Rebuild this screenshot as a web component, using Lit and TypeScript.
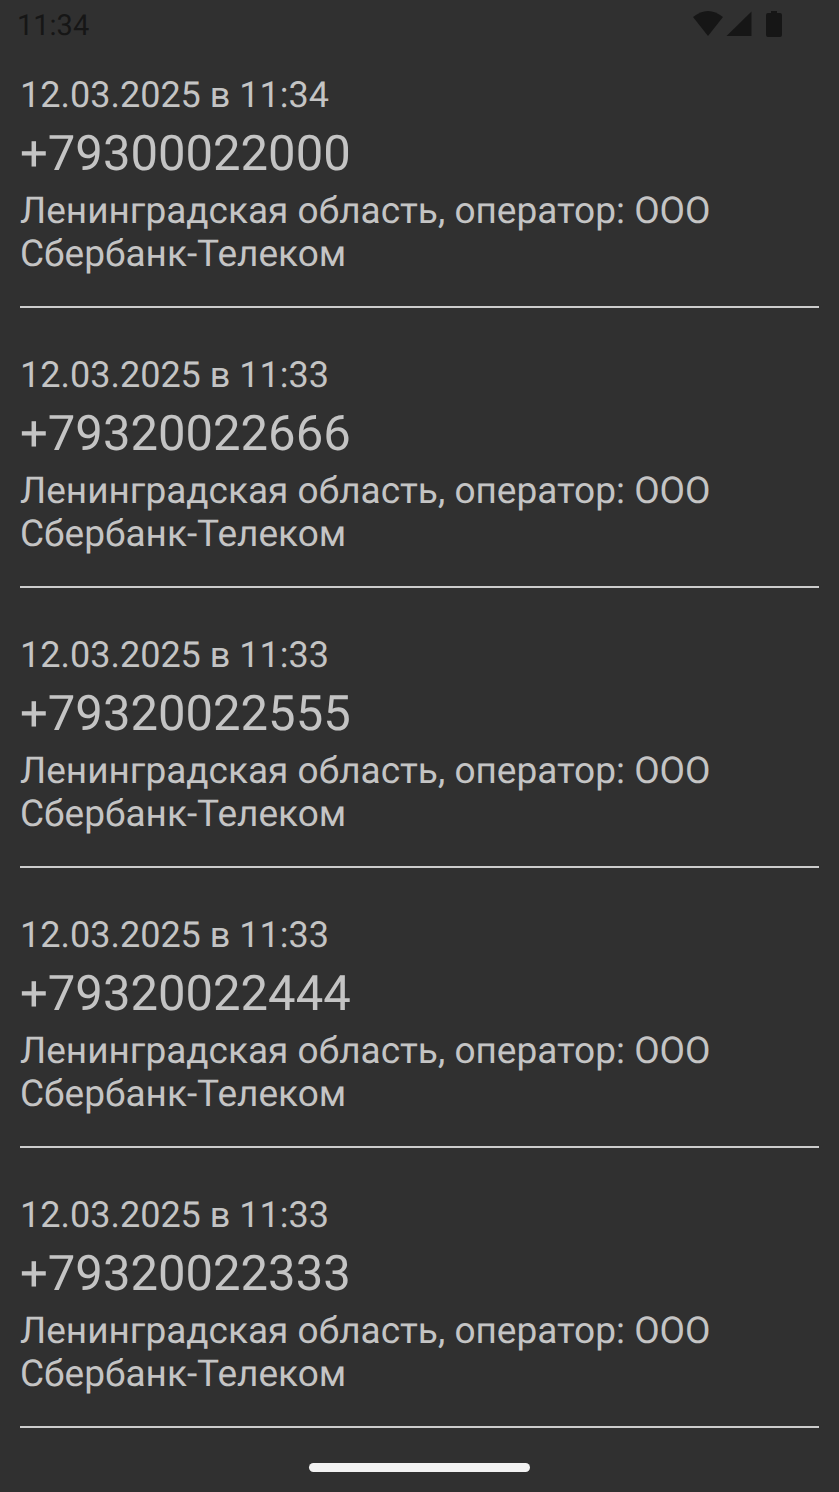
import { LitElement, html, css } from "lit";
import { customElement } from "lit/decorators.js";

interface Call {
  date: string;
  phone: string;
  info: string;
}

const INFO = "Ленинградская область, оператор: ООО Сбербанк-Телеком";

const CALLS: Call[] = [
  { date: "12.03.2025 в 11:34", phone: "+79300022000", info: INFO },
  { date: "12.03.2025 в 11:33", phone: "+79320022666", info: INFO },
  { date: "12.03.2025 в 11:33", phone: "+79320022555", info: INFO },
  { date: "12.03.2025 в 11:33", phone: "+79320022444", info: INFO },
  { date: "12.03.2025 в 11:33", phone: "+79320022333", info: INFO },
];

@customElement("app-root")
export class AppRoot extends LitElement {
  static styles = css`
    :host {
      display: flex;
      flex-direction: column;
      min-height: 100vh;
      background: #303030;
      color: #c4c4c4;
      font-family: Roboto, sans-serif;
      text-rendering: geometricPrecision;
    }
    .status {
      display: flex;
      align-items: center;
      justify-content: space-between;
      padding: 0 56px 0 17px;
      height: 52px;
      color: #161616;
      font-size: 29px;
    }
    .icons {
      display: block;
      width: 90px;
      height: 30px;
      fill: currentColor;
    }
    .list {
      list-style: none;
      margin: 0;
      padding: 0 20px;
      flex: 1;
    }
    .call {
      padding: 22px 0 30px;
      border-bottom: 2px solid #cccccc;
    }
    .call + .call {
      padding-top: 46px;
    }
    p {
      margin: 0;
    }
    .date,
    .info {
      font-size: 37px;
      line-height: 43px;
    }
    .date {
      font-size: 36px;
    }
    .phone {
      font-size: 49px;
      line-height: 58px;
      margin: 8px 0 7px;
    }
    .nav {
      display: flex;
      justify-content: center;
      padding-bottom: 20px;
    }
    .handle {
      width: 221px;
      height: 9px;
      border-radius: 5px;
      background: #f2f2f2;
    }
  `;

  render() {
    return html`
      <header class="status">
        <time>11:34</time>
        <svg class="icons" viewBox="0 0 90 30" aria-hidden="true">
          <path d="M0 6Q15-6 30 6L15 25Z" />
          <path d="M58.500 0.500V25H33.500Z" />
          <path d="M78 0h6v2h3q2 0 2 2v20q0 2-2 2H75q-2 0-2-2V4q0-2 2-2h3z" />
        </svg>
      </header>
      <ul class="list">
        ${CALLS.map(
          (c) => html`<li class="call">
            <p class="date">${c.date}</p>
            <p class="phone">${c.phone}</p>
            <p class="info">${c.info}</p>
          </li>`
        )}
      </ul>
      <footer class="nav"><div class="handle"></div></footer>
    `;
  }
}
